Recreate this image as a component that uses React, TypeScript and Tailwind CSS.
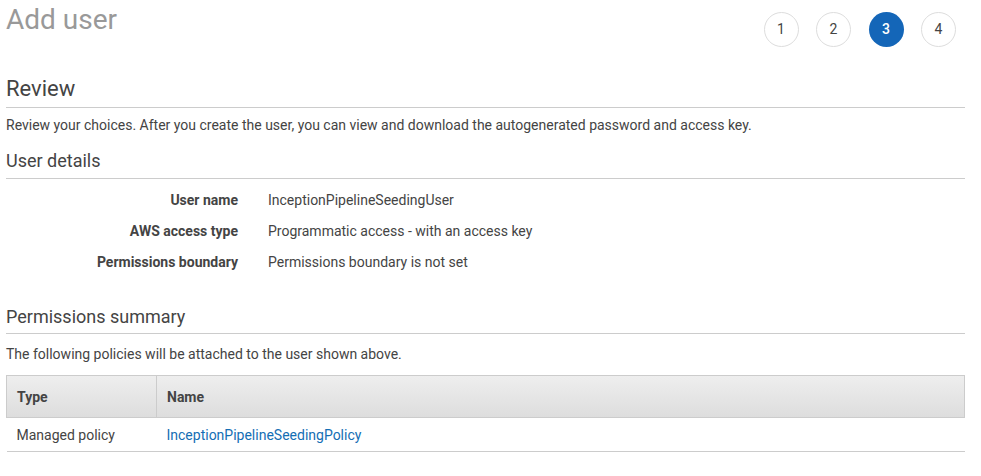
import React from 'react';

const details = [
  { label: 'User name', value: 'InceptionPipelineSeedingUser' },
  { label: 'AWS access type', value: 'Programmatic access - with an access key' },
  { label: 'Permissions boundary', value: 'Permissions boundary is not set' },
];

const steps = [1, 2, 3, 4];

const App: React.FC = () => {
  const current = 3;

  return (
    <div className="min-h-screen bg-white pl-[6px] pr-[16px] text-[#444] font-['Roboto','Liberation_Sans',sans-serif]">
      {/* header */}
      <div className="flex h-[75px] items-start justify-between">
        <h1 className="text-[28px] leading-[40px] text-[#999]">Add user</h1>
        <div className="mr-[9px] mt-[12px] flex gap-[17.5px]">
          {steps.map((s) => (
            <div
              key={s}
              className={
                s === current
                  ? 'flex h-[35px] w-[35px] items-center justify-center rounded-full bg-[#1466b8] text-[14px] font-medium text-white'
                  : 'flex h-[35px] w-[35px] items-center justify-center rounded-full border border-[#ddd] text-[14px] text-[#444]'
              }
            >
              {s}
            </div>
          ))}
        </div>
      </div>

      {/* review */}
      <h2 className="border-b border-[#ccc] pb-[4px] text-[22px] leading-[28px]">Review</h2>
      <p className="mt-[7px] text-[14px] leading-[20px]">
        Review your choices. After you create the user, you can view and download the autogenerated password and access key.
      </p>

      {/* user details */}
      <h3 className="mt-[14px] border-b border-[#ccc] pb-[5px] text-[18px] leading-[24px]">User details</h3>
      <div className="mt-[5px]">
        {details.map((d) => (
          <div key={d.label} className="flex h-[31px] items-center text-[14px] leading-[20px]">
            <div className="w-[232px] text-right font-bold">{d.label}</div>
            <div className="pl-[30px]">{d.value}</div>
          </div>
        ))}
      </div>

      {/* permissions */}
      <h3 className="mt-[28px] border-b border-[#ccc] pb-[4px] text-[18px] leading-[24px]">Permissions summary</h3>
      <p className="mt-[10px] text-[14px] leading-[20px]">The following policies will be attached to the user shown above.</p>

      <table className="mt-[11px] w-full border-collapse text-[14px] leading-[20px]">
        <thead>
          <tr className="bg-gradient-to-b from-[#eee] to-[#ddd]">
            <th className="h-[42px] w-[150px] border border-[#ccc] px-[10px] text-left font-bold">Type</th>
            <th className="h-[42px] border border-[#ccc] px-[10px] text-left font-bold">Name</th>
          </tr>
        </thead>
        <tbody>
          <tr className="border-b border-[#ccc]">
            <td className="h-[34px] px-[10px]">Managed policy</td>
            <td className="h-[34px] px-[10px]">
              <a className="text-[#146eb4]">InceptionPipelineSeedingPolicy</a>
            </td>
          </tr>
        </tbody>
      </table>
    </div>
  );
};

export default App;
